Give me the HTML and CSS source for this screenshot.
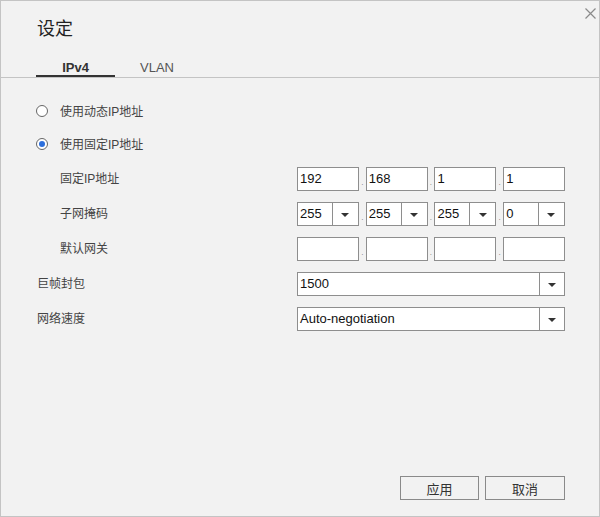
FILE: index.html
```html
<!DOCTYPE html>
<html lang="zh">
<head>
<meta charset="utf-8">
<link rel="stylesheet" href="styles.css">
</head>
<body>
<div class="dialog">
  <div class="close"><svg width="11" height="11" viewBox="0 0 11 11"><path d="M0.5 0.5 L10.5 10.5 M10.5 0.5 L0.5 10.5" stroke="#8a8a8a" stroke-width="1.2" fill="none"/></svg></div>
  <h1 class="title">设定</h1>
  <div class="tabs">
    <div class="tab active">IPv4</div>
    <div class="tab">VLAN</div>
  </div>
  <div class="content">
    <div class="radio-row"><span class="radio"></span><span class="rlabel">使用动态IP地址</span></div>
    <div class="radio-row"><span class="radio checked"></span><span class="rlabel">使用固定IP地址</span></div>
    <div class="form">
      <div class="label indent">固定IP地址</div>
      <div class="ip">
        <div class="box">192</div><span class="dot">.</span>
        <div class="box">168</div><span class="dot">.</span>
        <div class="box">1</div><span class="dot">.</span>
        <div class="box">1</div>
      </div>
      <div class="label indent">子网掩码</div>
      <div class="ip">
        <div class="box sel"><span class="v">255</span><span class="arr"></span></div><span class="dot">.</span>
        <div class="box sel"><span class="v">255</span><span class="arr"></span></div><span class="dot">.</span>
        <div class="box sel"><span class="v">255</span><span class="arr"></span></div><span class="dot">.</span>
        <div class="box sel"><span class="v">0</span><span class="arr"></span></div>
      </div>
      <div class="label indent">默认网关</div>
      <div class="ip">
        <div class="box"></div><span class="dot">.</span>
        <div class="box"></div><span class="dot">.</span>
        <div class="box"></div><span class="dot">.</span>
        <div class="box"></div>
      </div>
      <div class="label">巨帧封包</div>
      <div class="box sel wide"><span class="v">1500</span><span class="arr"></span></div>
      <div class="label">网络速度</div>
      <div class="box sel wide"><span class="v">Auto-negotiation</span><span class="arr"></span></div>
    </div>
  </div>
  <div class="footer">
    <button class="btn">应用</button>
    <button class="btn">取消</button>
  </div>
</div>
</body>
</html>
```
FILE: styles.css
```css
* { box-sizing: border-box; }
html, body { margin: 0; padding: 0; }
body {
  font-family: "Liberation Sans", "Noto Sans CJK SC", sans-serif;
  background: #f2f2f2;
}
.dialog {
  position: relative;
  width: 600px;
  height: 517px;
  border: 1px solid #c4c4c4;
  background: #f2f2f2;
  display: flex;
  flex-direction: column;
}
.close {
  position: absolute;
  top: 7px;
  right: 3px;
  width: 11px;
  height: 11px;
  display: flex;
}
.title {
  margin: 0;
  padding: 16px 0 0 36px;
  height: 51px;
  font-size: 18px;
  font-weight: normal;
  color: #222;
  line-height: 24px;
}
.tabs {
  display: flex;
  padding-left: 35px;
  border-bottom: 1px solid #c4c4c4;
  height: 26px;
}
.tab {
  width: 84px;
  text-align: center;
  font-size: 13px;
  color: #555;
  line-height: 16px;
  padding-top: 8px;
}
.tab.active {
  font-weight: bold;
  color: #333;
  border-bottom: 2px solid #333;
  width: 79px;
}
.content {
  padding: 16px 34px 0 35px;
  flex: 1;
}
.radio-row {
  display: flex;
  align-items: center;
  height: 33px;
  font-size: 12px;
  color: #444;
}
.rlabel { padding-bottom: 1px; }
.radio {
  width: 12px;
  height: 12px;
  border: 1px solid #666;
  border-radius: 50%;
  background: #fff;
  margin-right: 12px;
  display: flex;
  align-items: center;
  justify-content: center;
}
.radio.checked::after {
  content: "";
  width: 6px;
  height: 6px;
  border-radius: 50%;
  background: #2c6fdc;
}
.form {
  margin-top: 7px;
  display: grid;
  grid-template-columns: 261px 268px;
  grid-auto-rows: 24px;
  row-gap: 11px;
  align-items: center;
}
.label {
  font-size: 12px;
  color: #444;
  padding-left: 1px;
  padding-bottom: 3px;
}
.label.indent { padding-left: 24px; }
.ip {
  display: flex;
  align-items: stretch;
  height: 24px;
}
.box {
  width: 62px;
  height: 24px;
  border: 1px solid #8e8e8e;
  background: #fff;
  font-size: 13px;
  color: #111;
  padding: 0 0 0 2px;
  line-height: 21px;
  display: flex;
}
.dot {
  width: 7px;
  font-size: 8px;
  color: #777;
  text-align: center;
  line-height: 24px;
  padding-top: 4px;
}
.box.sel { padding: 0; }
.box.sel .v { flex: 1; padding-left: 2px; }
.box.sel .arr {
  width: 26px;
  border-left: 1px solid #8e8e8e;
  position: relative;
}
.box.sel .arr::after {
  content: "";
  position: absolute;
  left: 50%;
  top: 50%;
  margin-left: -4px;
  margin-top: -1px;
  border-left: 4px solid transparent;
  border-right: 4px solid transparent;
  border-top: 4px solid #333;
}
.box.wide { width: 268px; }
.box.wide .arr { width: 25px; }
.footer {
  display: flex;
  justify-content: flex-end;
  gap: 6px;
  padding: 0 34px 16px 0;
}
.btn {
  width: 79px;
  height: 24px;
  border: 1px solid #8a8a8a;
  background: #f2f2f2;
  font-family: "Noto Sans CJK SC", sans-serif;
  font-size: 13px;
  color: #333;
  padding: 0;
}
.btn + .btn { width: 80px; }
```
